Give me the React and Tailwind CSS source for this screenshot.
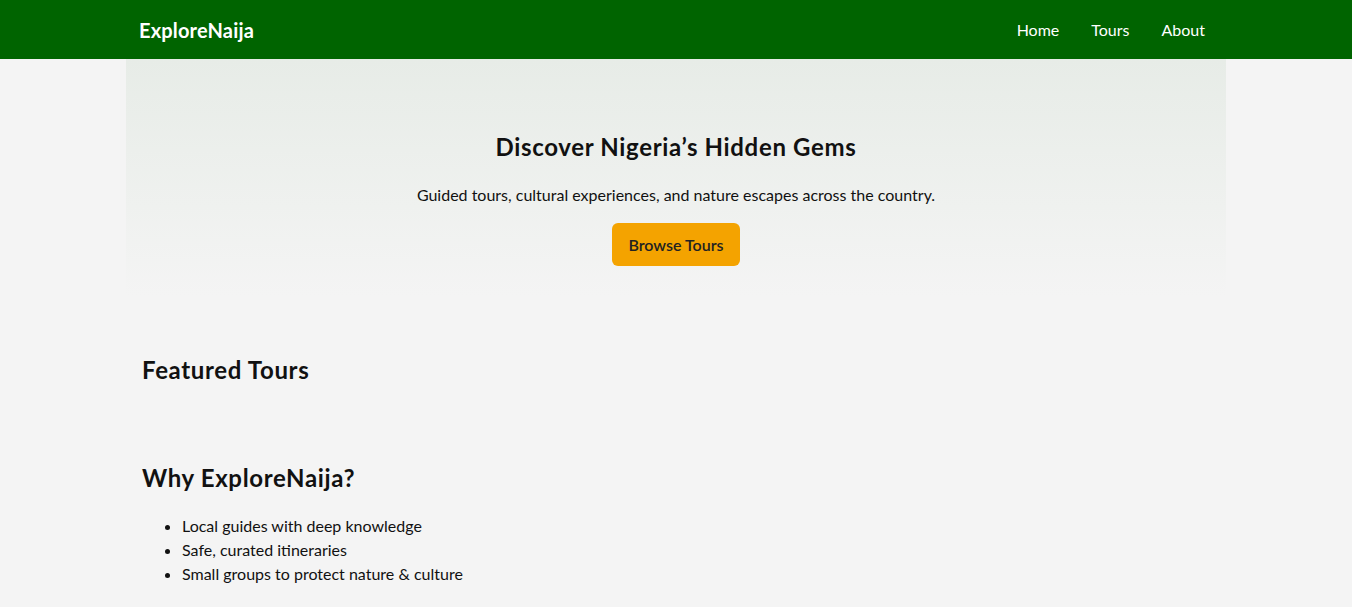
export default function App() {
  const reasons = [
    'Local guides with deep knowledge',
    'Safe, curated itineraries',
    'Small groups to protect nature & culture',
  ]

  return (
    <div className="min-h-[607px] bg-[#f4f4f4] text-[#111] font-['Lato','Liberation_Sans',sans-serif]">
      <header className="bg-[#006400] text-white">
        <div className="mx-auto flex h-[59px] max-w-[1100px] items-center justify-between pl-[13px] pr-[21px]">
          <span className="text-[20px] font-bold tracking-[0.17px]">ExploreNaija</span>
          <nav className="flex gap-8 text-[16px]">
            <a href="#">Home</a>
            <a href="#">Tours</a>
            <a href="#">About</a>
          </nav>
        </div>
      </header>

      <section className="mx-auto flex max-w-[1100px] flex-col items-center bg-gradient-to-b from-[#e7ece7] to-[#f4f4f4] px-4 pt-[70px] pb-[30px] text-center">
        <h1 className="text-[24px] font-bold leading-[36px] tracking-[0.66px]">Discover Nigeria’s Hidden Gems</h1>
        <p className="mt-[18px] text-[16px] leading-6">
          Guided tours, cultural experiences, and nature escapes across the country.
        </p>
        <button className="mt-4 h-[43px] rounded-md bg-[#f4a300] px-4 text-[16px] font-semibold text-[#222]">
          Browse Tours
        </button>
      </section>

      <main className="mx-auto max-w-[1100px] px-4">
        <h2 className="mt-[59px] text-[24px] font-bold leading-[30px] tracking-[0.65px]">Featured Tours</h2>
        <h2 className="mt-[78px] text-[24px] font-bold leading-[30px] tracking-[0.65px]">Why ExploreNaija?</h2>
        <ul className="mt-[21px] list-disc pl-10 text-[16px] leading-6">
          {reasons.map((r) => (
            <li key={r}>{r}</li>
          ))}
        </ul>
      </main>
    </div>
  )
}
